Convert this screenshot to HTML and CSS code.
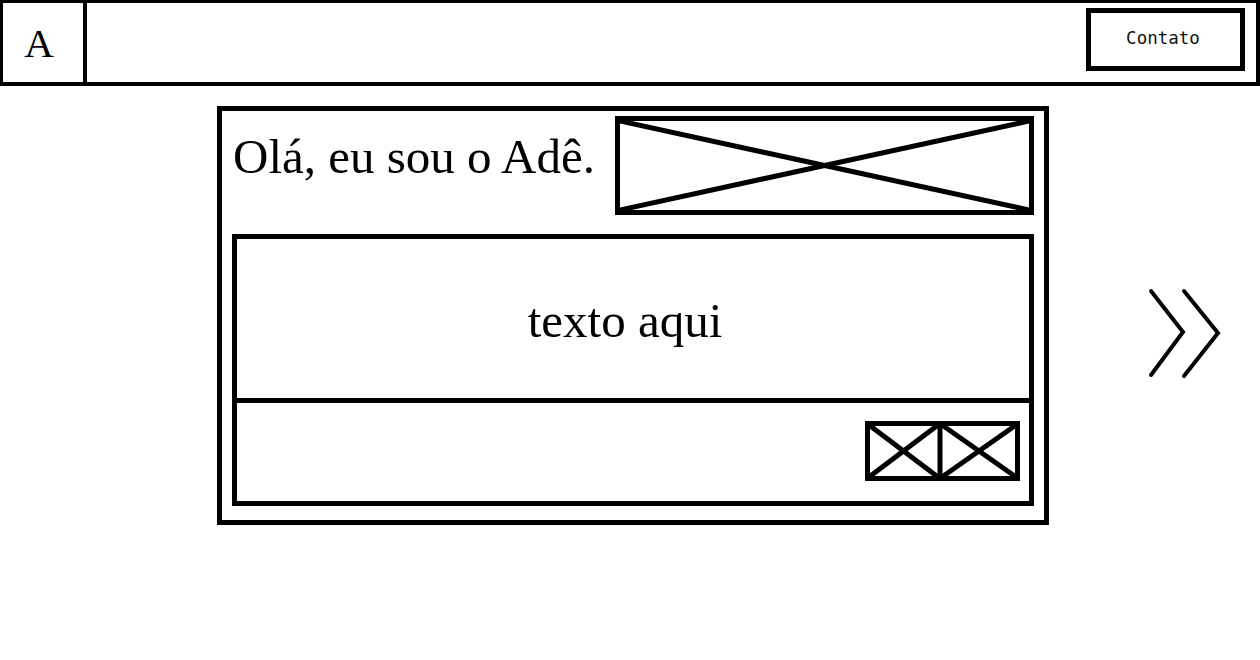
FILE: index.html
```html
<!DOCTYPE html>
<html lang="pt">
<head>
<meta charset="utf-8">
<title>Adê</title>
<link rel="stylesheet" href="styles.css">
</head>
<body>
<header class="topbar">
  <div class="logo">A</div>
  <a class="contact" href="#">Contato</a>
</header>
<main class="stage">
  <section class="card">
    <div class="card-head">
      <h1 class="greeting">Olá, eu sou o Adê.</h1>
      <div class="placeholder">
        <svg class="x-lines" viewBox="0 0 409 89" preserveAspectRatio="none">
          <line x1="0" y1="0" x2="409" y2="89"/>
          <line x1="0" y1="89" x2="409" y2="0"/>
        </svg>
      </div>
    </div>
    <div class="text-box">texto aqui</div>
    <div class="actions">
      <svg class="icons" width="155" height="60" viewBox="0 0 155 60">
        <rect x="2.5" y="2.5" width="150" height="55"/>
        <line x1="75" y1="2" x2="75" y2="58"/>
        <line x1="4" y1="4" x2="73" y2="56"/>
        <line x1="4" y1="56" x2="73" y2="4"/>
        <line x1="77" y1="4" x2="151" y2="56"/>
        <line x1="77" y1="56" x2="151" y2="4"/>
      </svg>
    </div>
  </section>
  <a class="next" href="#" aria-label="Próximo">
    <svg width="80" height="92" viewBox="0 0 80 92">
      <polyline points="5,3 37,44 5,87"/>
      <polyline points="38,3 72,45 38,88"/>
    </svg>
  </a>
</main>
</body>
</html>
```

FILE: styles.css
```css
* { box-sizing: border-box; }

html, body {
  margin: 0;
  padding: 0;
  background: #fff;
  color: #000;
}

body {
  font-family: "Liberation Serif", "Times New Roman", serif;
  width: 1260px;
  height: 660px;
  overflow: hidden;
}

.topbar {
  display: flex;
  height: 86px;
  border: 4px solid #000;
  border-top-width: 3px;
  border-left-width: 3px;
}

.logo {
  width: 84px;
  border-right: 4px solid #000;
  display: flex;
  align-items: center;
  justify-content: center;
  font-size: 41px;
  padding-right: 8px;
  padding-top: 0;
}

.contact {
  margin-left: auto;
  margin-top: 5px;
  margin-right: 11px;
  width: 159px;
  height: 63px;
  border: 5px solid #000;
  display: flex;
  align-items: center;
  justify-content: center;
  font-family: "DejaVu Sans Mono", "Liberation Mono", monospace;
  font-size: 17.5px;
  color: #111;
  text-decoration: none;
  padding-right: 5px;
  padding-bottom: 3px;
}

.stage {
  display: grid;
  grid-template-columns: 217px 832px 1fr;
}

.card {
  grid-column: 2;
  margin-top: 20px;
  height: 419px;
  border: 5px solid #000;
  padding: 5px 10px 14px 10px;
  display: flex;
  flex-direction: column;
}

.card-head {
  display: flex;
  align-items: center;
  justify-content: space-between;
  height: 99px;
}

.greeting {
  margin: 0 0 18px 1px;
  font-weight: normal;
  font-size: 49px;
  line-height: 1;
}

.placeholder {
  width: 419px;
  height: 99px;
  border: 5px solid #000;
}

.x-lines {
  display: block;
  width: 100%;
  height: 100%;
}

.x-lines line {
  stroke: #000;
  stroke-width: 5;
  vector-effect: non-scaling-stroke;
}

.text-box {
  margin-top: 19px;
  height: 169px;
  border: 5px solid #000;
  display: flex;
  align-items: center;
  justify-content: center;
  font-size: 49px;
  padding-right: 16px;
  padding-top: 4px;
}

.actions {
  height: 103px;
  border: 5px solid #000;
  border-top: 0;
  display: flex;
  align-items: center;
  justify-content: flex-end;
  padding-right: 9px;
  padding-bottom: 2px;
}

.icons {
  display: block;
}

.icons rect,
.icons line {
  fill: none;
  stroke: #000;
  stroke-width: 5;
}

.next {
  grid-column: 3;
  justify-self: start;
  align-self: start;
  margin-top: 202px;
  margin-left: 97px;
  display: block;
}

.next svg {
  display: block;
}

.next polyline {
  fill: none;
  stroke: #000;
  stroke-width: 4;
  stroke-linecap: round;
  stroke-linejoin: miter;
}
```
